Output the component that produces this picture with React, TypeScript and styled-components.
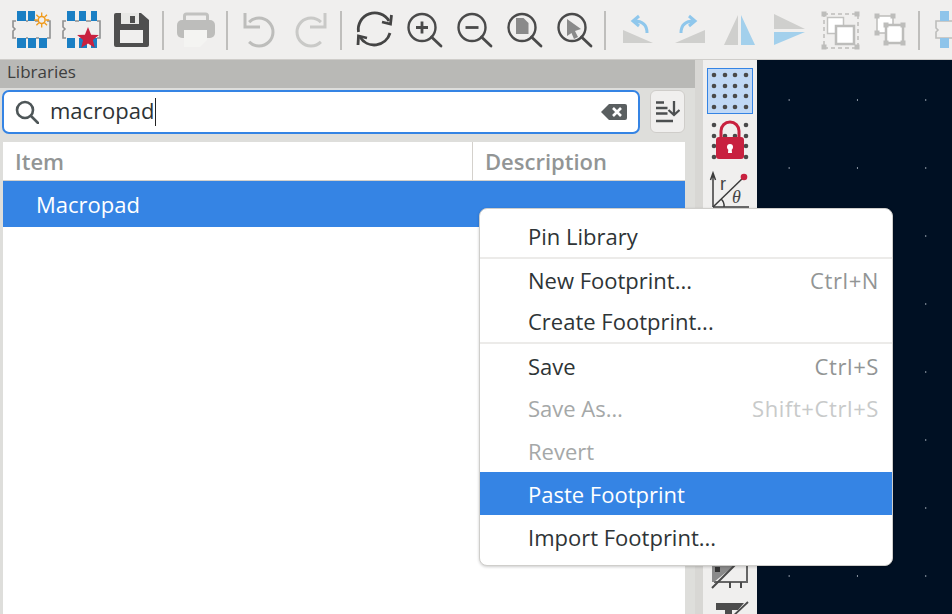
import React from 'react'
import styled, { createGlobalStyle } from 'styled-components'

const Global = createGlobalStyle`
  html, body { margin: 0; padding: 0; height: 100%; overflow: hidden; }
  body { font-family: "Open Sans", "Noto Sans", sans-serif; background: #f0efee; }
  #root { height: 100%; }
`

const Window = styled.div`
  position: relative;
  width: 952px;
  height: 614px;
  display: flex;
  flex-direction: column;
  overflow: hidden;
  background: #f0efee;
`

const TopBar = styled.div`
  height: 60px;
  flex: none;
  box-sizing: border-box;
  display: flex;
  align-items: flex-start;
  padding: 8px 0 0 6px;
  background: #f0efee;
  border-bottom: 1px solid #cfcdca;
`

const ToolIcon = styled.svg`
  width: 50px;
  height: 44px;
  flex: none;
`

const Divider = styled.div`
  width: 2px;
  height: 39px;
  margin: 3px 6px 0;
  flex: none;
  background: #bfbebc;
`

const Main = styled.div`
  flex: 1;
  display: flex;
  min-height: 0;
`

const LeftPanel = styled.div`
  width: 695px;
  flex: none;
  display: flex;
  flex-direction: column;
  background: #dededb;
`

const Caption = styled.div`
  height: 28px;
  padding: 0 0 6px 7px;
  box-sizing: border-box;
  display: flex;
  align-items: center;
  background: #b9b9b6;
  color: #3e3e3e;
  font-size: 17px;
`

const SearchRow = styled.div`
  display: flex;
  align-items: center;
  gap: 10px;
  padding: 1px 10px 0 2px;
  height: 46px;
  box-sizing: border-box;
`

const SearchBox = styled.div`
  flex: 1;
  height: 44px;
  box-sizing: border-box;
  border: 2px solid #3584e4;
  border-radius: 7px;
  background: #fff;
  display: flex;
  align-items: center;
  padding: 0 11px 0 11px;
  color: #2e3436;
`

const Query = styled.span`
  margin-left: 11px;
  flex: 1;
  font-size: 22px;
  line-height: 28px;
  position: relative;
  top: -1px;
  &::after {
    content: '';
    display: inline-block;
    width: 1px;
    height: 28px;
    background: #222;
    vertical-align: -7px;
  }
`

const SortButton = styled.div`
  width: 35px;
  height: 43px;
  box-sizing: border-box;
  border: 1px solid #cfcdca;
  border-radius: 6px;
  background: #f0efee;
  display: flex;
  align-items: center;
  justify-content: center;
`

const Table = styled.div`
  margin: 8px 10px 0 3px;
  flex: 1;
  background: #fff;
  display: flex;
  flex-direction: column;
`

const HeaderRow = styled.div`
  height: 39px;
  flex: none;
  display: flex;
  box-sizing: border-box;
  border-bottom: 1px solid #d4d1cc;
`

const HeaderCell = styled.div<{ $w?: number }>`
  ${p => (p.$w ? `width: ${p.$w}px; border-right: 1px solid #d4d1cc;` : 'flex: 1;')}
  box-sizing: border-box;
  padding-left: 12px;
  display: flex;
  align-items: center;
  color: #929595;
  font-size: 22px;
  font-weight: 600;
`

const SelectedRow = styled.div`
  height: 46px;
  flex: none;
  padding-left: 33px;
  display: flex;
  align-items: center;
  background: #3584e4;
  color: #fff;
  font-size: 22px;
`

const Sash = styled.div`
  width: 8px;
  flex: none;
  background: #d8d7d4;
`

const SideBar = styled.div`
  width: 54px;
  flex: none;
  display: flex;
  flex-direction: column;
  gap: 4px;
  padding: 8px 0 0 4px;
  box-sizing: border-box;
  overflow: hidden;
  background: #f0efee;
`

const SideTool = styled.div<{ $active?: boolean }>`
  width: 46px;
  height: 46px;
  flex: none;
  box-sizing: border-box;
  border: 1px solid ${p => (p.$active ? '#3584e4' : 'transparent')};
  background: ${p => (p.$active ? '#c1d9f6' : 'transparent')};
`

const SideIcon = styled.svg`
  display: block;
  width: 44px;
  height: 44px;
`

const SideSpacer = styled.div`
  height: 326px;
  flex: none;
`

const Canvas = styled.div`
  flex: 1;
  background-color: #001023;
  background-image: radial-gradient(circle at center, #8a93a0 0.7px, transparent 1px);
  background-size: 68.3px 68px;
  background-position: -2px 6px;
`

const Menu = styled.div`
  position: absolute;
  left: 479px;
  top: 208px;
  width: 414px;
  height: 358px;
  box-sizing: border-box;
  padding: 6px 0 7px;
  background: #fff;
  border: 1px solid #cfcecb;
  border-radius: 8px;
  overflow: hidden;
  display: flex;
  flex-direction: column;
  box-shadow: 0 1px 3px rgba(0, 0, 0, 0.2);
`

const MenuItem = styled.div<{ $disabled?: boolean; $active?: boolean; $sep?: boolean; $h?: number }>`
  height: ${p => p.$h ?? 43}px;
  flex: none;
  box-sizing: border-box;
  display: flex;
  align-items: center;
  justify-content: space-between;
  padding: 0 13px 0 48px;
  font-size: 22px;
  border-top: ${p => (p.$sep ? '2px solid #ecebe9' : '0')};
  color: ${p => (p.$active ? '#fff' : p.$disabled ? '#a5a8a8' : '#2e3436')};
  background: ${p => (p.$active ? '#3584e4' : 'transparent')};
`

const Shortcut = styled.span<{ $disabled?: boolean }>`
  letter-spacing: 0.6px;
  color: ${p => (p.$disabled ? '#c8caca' : '#929595')};
`

const PadRow = ({ pads, fill = '#1a7fc4' }: { pads: number[][]; fill?: string }) => (
  <g fill={fill}>
    {pads.map(([x, y, w]) => (
      <rect key={`${x}-${y}`} x={x} y={y} width={w} height={10} />
    ))}
  </g>
)

const Outline = () => (
  <path
    d="M10 13H7v6l2 2-2 2v7h3M41 13h3v17h-3"
    fill="none"
    stroke="#8f9090"
    strokeWidth="1.6"
  />
)

const NewFootprintIcon = () => (
  <ToolIcon viewBox="0 0 50 44">
    <Outline />
    <path d="M20 13h2M29 13h4M20 30h2M30 30h3" stroke="#8f9090" strokeWidth="1.6" />
    <PadRow pads={[[11, 3, 9], [22, 3, 7], [11, 30, 9], [22, 30, 8], [33, 30, 8]]} />
    <circle cx="35.7" cy="12" r="3.4" fill="none" stroke="#f09a1a" strokeWidth="1.5" />
    <path
      d="M35.7 4.500v3.500M35.7 16v3.500M28.200 12h3.500M39.700 12h3.500M30.400 6.700l2.500 2.500M38.500 14.800l2.500 2.500M41 6.700l-2.500 2.500M32.900 14.800l-2.500 2.500"
      stroke="#f09a1a"
      strokeWidth="1.3"
    />
  </ToolIcon>
)

const StarFootprintIcon = () => (
  <ToolIcon viewBox="0 0 50 44">
    <Outline />
    <path d="M19 13h4M30 13h5" stroke="#8f9090" strokeWidth="1.6" />
    <PadRow pads={[[11, 3, 8], [23, 3, 7], [35, 3, 6], [11, 30, 8], [23, 30, 8], [35, 30, 6]]} />
    <path
      transform="translate(0 1.500)"
      d="M32 17.500L35.100 25.200 42.900 25.400 36.900 30.600 38.800 38.300 32 34.100 25.200 38.300 27.100 30.600 21.100 25.400 28.900 25.200z"
      fill="#c8213f"
    />
  </ToolIcon>
)

const SaveIcon = () => (
  <ToolIcon viewBox="0 0 50 44">
    <path d="M10 5h25l8 7v25a2 2 0 0 1-2 2H10a2 2 0 0 1-2-2V7a2 2 0 0 1 2-2z" fill="#4f4f4f" />
    <rect x="15" y="5" width="18" height="11" fill="#e8e8e6" />
    <rect x="24" y="8" width="5" height="7" fill="#4f4f4f" />
    <rect x="14" y="22" width="23" height="13" fill="#f0efee" />
  </ToolIcon>
)

const PrintIcon = () => (
  <ToolIcon viewBox="0 0 50 44">
    <rect x="14.500" y="6" width="23" height="12" rx="2" fill="none" stroke="#c2c2c0" strokeWidth="3" />
    <rect x="7" y="12" width="38" height="18" rx="5" fill="#bdbdbb" />
    <path d="M14 22h23v10l-7 7H14z" fill="#f4f4f2" />
  </ToolIcon>
)

const UndoIcon = ({ color }: { color: string }) => (
  <>
    <path d="M11 5V19H26" fill="none" stroke={color} strokeWidth="3" />
    <path d="M15.100 14.100A14 14 0 1 1 15.100 33.900" fill="none" stroke={color} strokeWidth="3" />
  </>
)

const RefreshIcon = () => (
  <ToolIcon viewBox="0 0 50 44" fill="none" stroke="#444" strokeWidth="2.8">
    <path d="M10.500 24A16.500 16.500 0 0 1 41 13" />
    <path d="M43.500 7L42.500 16 34 14" />
    <path d="M42 25A16.500 16.500 0 0 1 12 29" />
    <path d="M10 37L10.500 28 19 30" />
  </ToolIcon>
)

const Magnifier = ({ children }: { children?: React.ReactNode }) => (
  <ToolIcon viewBox="0 0 50 44">
    <circle cx="24" cy="19.500" r="13.500" fill="none" stroke="#4a4a4a" strokeWidth="2.4" />
    <path d="M33.500 29L43 38" stroke="#4a4a4a" strokeWidth="2.8" strokeLinecap="round" />
    {children}
  </ToolIcon>
)

const RotateIcon = ({ flip }: { flip?: boolean }) => (
  <ToolIcon viewBox="0 0 50 44">
    <g transform={flip ? 'translate(54 0) scale(-1 1)' : undefined}>
      <path d="M11 22V35H41z" fill="#cfcfcd" />
      <path d="M35 25C35 17 31 13 22 13M27 8L21 13 27 18" fill="none" stroke="#8fc7ec" strokeWidth="3" />
    </g>
  </ToolIcon>
)

const Corners = ({ points }: { points: number[][] }) => (
  <g fill="#bdbdbb">
    {points.map(([x, y]) => (
      <rect key={`${x}-${y}`} x={x - 2.500} y={y - 2.500} width="5" height="5" />
    ))}
  </g>
)

const GridDots = ({ xs, ys }: { xs: number[]; ys: number[] }) => (
  <g fill="#4a4a4a">
    {ys.flatMap(y => xs.map(x => <circle key={`${x}-${y}`} cx={x} cy={y} r="2.300" />))}
  </g>
)

const menuRows = [
  { label: 'Pin Library', h: 42 },
  { label: 'New Footprint...', key: 'Ctrl+N', sep: true },
  { label: 'Create Footprint...', h: 42 },
  { label: 'Save', key: 'Ctrl+S', sep: true, h: 45 },
  { label: 'Save As…', key: 'Shift+Ctrl+S', disabled: true, h: 42 },
  { label: 'Revert', disabled: true },
  { label: 'Paste Footprint', active: true },
  { label: 'Import Footprint...' },
]

const App = () => (
  <Window>
    <Global />
    <TopBar>
      <NewFootprintIcon />
      <StarFootprintIcon />
      <SaveIcon />
      <Divider />
      <PrintIcon />
      <Divider />
      <ToolIcon viewBox="0 0 50 44"><UndoIcon color="#bdbdbb" /></ToolIcon>
      <ToolIcon viewBox="0 0 50 44">
        <g transform="translate(52 0) scale(-1 1)"><UndoIcon color="#c9c9c7" /></g>
      </ToolIcon>
      <Divider />
      <RefreshIcon />
      <Magnifier><path d="M24 13.500v12M18 19.500h12" stroke="#4a4a4a" strokeWidth="2.800" /></Magnifier>
      <Magnifier><path d="M17.500 19.500h13" stroke="#4a4a4a" strokeWidth="2.800" /></Magnifier>
      <Magnifier><path d="M18 10h7.500l5 5v11H18z" fill="#8a8a8a" /></Magnifier>
      <Magnifier><path d="M19 11L33 21 27 23 30 29 26 31 23.500 25 19 28z" fill="#8a8a8a" /></Magnifier>
      <Divider />
      <RotateIcon />
      <RotateIcon flip />
      <ToolIcon viewBox="0 0 50 44">
        <path d="M26 7V37H12z" fill="#cfcfcd" />
        <path d="M29 7V37H43z" fill="#a3d0ec" />
      </ToolIcon>
      <ToolIcon viewBox="0 0 50 44">
        <path d="M12 6L43 21H12z" fill="#cfcfcd" />
        <path d="M12 24H43L12 37z" fill="#a3d0ec" />
      </ToolIcon>
      <ToolIcon viewBox="0 0 50 44">
        <rect x="12" y="6" width="34" height="34" fill="none" stroke="#bdbdbb" strokeDasharray="4 3" strokeWidth="1.500" />
        <Corners points={[[12, 6], [45, 6], [12, 39], [45, 39]]} />
        <rect x="15.500" y="9.500" width="16" height="16" fill="#fff" stroke="#c2c2c0" strokeWidth="1.500" />
        <rect x="24" y="18" width="18" height="18" fill="#fff" stroke="#bdbdbb" strokeWidth="2.500" />
      </ToolIcon>
      <ToolIcon viewBox="0 0 50 44">
        <rect x="15" y="8" width="16" height="17" fill="#fff" stroke="#bdbdbb" strokeWidth="1.500" />
        <Corners points={[[15, 8], [31, 8], [15, 25]]} />
        <rect x="24" y="17" width="17" height="18" fill="#fff" stroke="#bdbdbb" strokeWidth="2.500" />
        <Corners points={[[24, 17], [41, 17], [24, 35], [41, 35]]} />
      </ToolIcon>
      <Divider />
      <ToolIcon viewBox="0 0 50 44">
        <path d="M26 13H10v7l2 2-2 2v6h16" fill="none" stroke="#bdbdbb" strokeWidth="1.600" />
        <PadRow fill="#8fc4ea" pads={[[14, 3, 9], [14, 30, 9]]} />
      </ToolIcon>
    </TopBar>
    <Main>
      <LeftPanel>
        <Caption>Libraries</Caption>
        <SearchRow>
          <SearchBox>
            <svg width="24" height="24" viewBox="0 0 24 24" fill="none" stroke="#4e5658" strokeWidth="2.600">
              <circle cx="10" cy="10" r="8" />
              <path d="M16 16l7 7" strokeLinecap="round" />
            </svg>
            <Query>macropad</Query>
            <svg width="26" height="18" viewBox="0 0 26 18">
              <path d="M8 1h16a2 2 0 0 1 2 2v12a2 2 0 0 1-2 2H8L0 9z" fill="#5a5f60" />
              <path d="M12 5l8 8M20 5l-8 8" stroke="#fff" strokeWidth="2.600" />
            </svg>
          </SearchBox>
          <SortButton>
            <svg width="24" height="24" viewBox="0 0 24 24" fill="none" stroke="#4c4f50" strokeWidth="2.300">
              <path d="M0 2.500h8M0 8h11.500M0 13.500h11.500M0 21h17" />
              <path d="M18 1v14M12.500 10l5.500 5 5.500-5" />
            </svg>
          </SortButton>
        </SearchRow>
        <Table>
          <HeaderRow>
            <HeaderCell $w={470}>Item</HeaderCell>
            <HeaderCell>Description</HeaderCell>
          </HeaderRow>
          <SelectedRow>Macropad</SelectedRow>
        </Table>
      </LeftPanel>
      <Sash />
      <SideBar>
        <SideTool $active>
          <SideIcon viewBox="0 0 44 44">
            <GridDots xs={[6, 17, 27, 38]} ys={[6, 17, 27, 38]} />
          </SideIcon>
        </SideTool>
        <SideTool>
          <SideIcon viewBox="0 0 44 44">
            <GridDots xs={[6, 38]} ys={[6, 17, 27, 38]} />
            <GridDots xs={[17, 27]} ys={[17]} />
            <path d="M13 19V12a8.500 8.500 0 0 1 18 0V19" fill="none" stroke="#c8213f" strokeWidth="3" />
            <rect x="8" y="18" width="28" height="22" rx="3" fill="#c8213f" />
            <circle cx="22" cy="28" r="3" fill="#fff" />
            <path d="M20.500 28h3l.5 6h-4z" fill="#fff" />
          </SideIcon>
        </SideTool>
        <SideTool>
          <SideIcon viewBox="0 0 44 44" fill="none" stroke="#3c3c3c" strokeWidth="1.500">
            <path d="M5 38V5M2.500 11L5 4l2.500 7" />
            <path d="M5 38h36" />
            <path d="M5 38L36 8" />
            <path d="M13 30a9 9 0 0 1 3 8" />
            <circle cx="36" cy="8" r="3.300" fill="#c8213f" stroke="none" />
            <text x="12" y="21" fontFamily="Liberation Sans, sans-serif" fontSize="18" fill="#444" stroke="none">r</text>
            <text x="24" y="34" fontFamily="Liberation Serif, serif" fontStyle="italic" fontSize="18" fill="#444" stroke="none">θ</text>
          </SideIcon>
        </SideTool>
        <SideSpacer />
        <SideTool>
          <SideIcon viewBox="0 0 44 44">
            <path d="M39 4V33H6" fill="none" stroke="#666" strokeWidth="2" />
            <path d="M4 16H27L6 33H4z" fill="#8a8a8a" />
            <rect x="7" y="18" width="5" height="5" fill="#333" />
            <path d="M4 39L30 13M22 33v6M33 33v6" stroke="#4a4a4a" strokeWidth="2" />
          </SideIcon>
        </SideTool>
        <SideTool>
          <SideIcon viewBox="0 0 44 44">
            <path d="M8 4H36L30 11H24V40H17V11H8z" fill="#4c4c4c" />
            <path d="M22 20L40 3" stroke="#4c4c4c" strokeWidth="1.800" />
          </SideIcon>
        </SideTool>
      </SideBar>
      <Canvas />
    </Main>
    <Menu>
      {menuRows.map(row => (
        <MenuItem key={row.label} $h={row.h} $sep={row.sep} $disabled={row.disabled} $active={row.active}>
          {row.label}
          {row.key && <Shortcut $disabled={row.disabled}>{row.key}</Shortcut>}
        </MenuItem>
      ))}
    </Menu>
  </Window>
)

export default App
